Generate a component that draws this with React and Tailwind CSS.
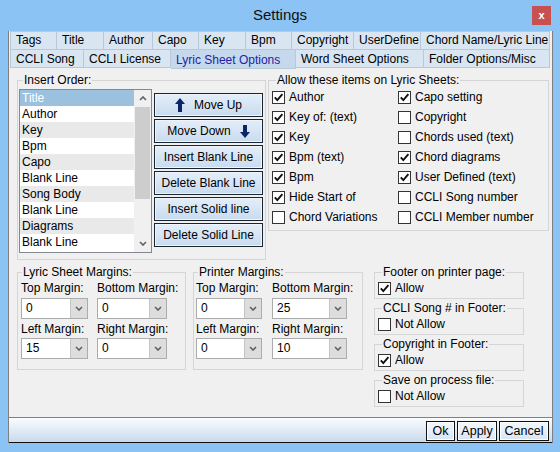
import React from 'react';

const row1 = [
  ['Tags', 'w-[47px]'],
  ['Title', 'w-[47px]'],
  ['Author', 'w-[49px]'],
  ['Capo', 'w-[46px]'],
  ['Key', 'w-[47px]'],
  ['Bpm', 'w-[46px]'],
  ['Copyright', 'w-[62px]'],
  ['UserDefine', 'w-[67px]'],
  ['Chord Name/Lyric Line', 'w-[129px]'],
];

const row2 = [
  ['CCLI Song', 'w-[74px]'],
  ['CCLI License', 'w-[87px]'],
  ['Lyric Sheet Options', 'w-[125px]', true],
  ['Word Sheet Options', 'w-[128px]'],
  ['Folder Options/Misc', 'w-[126px]'],
];

const order = ['Title', 'Author', 'Key', 'Bpm', 'Capo', 'Blank Line', 'Song Body', 'Blank Line', 'Diagrams', 'Blank Line'];

const allowLeft = [
  ['Author', true],
  ['Key of: (text)', true],
  ['Key', true],
  ['Bpm (text)', true],
  ['Bpm', true],
  ['Hide Start of', true],
  ['Chord Variations', false],
];

const allowRight = [
  ['Capo setting', true],
  ['Copyright', false],
  ['Chords used (text)', false],
  ['Chord diagrams', true],
  ['User Defined (text)', true],
  ['CCLI Song number', false],
  ['CCLI Member number', false],
];

const footers = [
  ['Footer on printer page:', 'Allow', true],
  ['CCLI Song # in Footer:', 'Not Allow', false],
  ['Copyright in Footer:', 'Allow', true],
  ['Save on process file:', 'Not Allow', false],
];

const Check = ({ checked }) => (
  <span className="w-[13px] h-[13px] border border-[#333333] bg-white flex items-center justify-center shrink-0">
    {checked && (
      <svg width="11" height="11" viewBox="0 0 11 11">
        <path d="M1.8 5.4 L4.3 8.1 L9.4 2.1" fill="none" stroke="#111" strokeWidth="1.9" />
      </svg>
    )}
  </span>
);

const Chevron = ({ up }) => (
  <svg width="8" height="5" viewBox="0 0 8 5">
    <polyline points={up ? '1,4 4,1 7,4' : '1,1 4,4 7,1'} fill="none" stroke="#606060" strokeWidth="1.6" />
  </svg>
);

const Combo = ({ value }) => (
  <div className="h-[21px] flex border border-[#acacac] bg-white">
    <span className="flex-1 pl-[4px] leading-[19px]">{value}</span>
    <span className="w-[17px] bg-[#dddddd] border-l border-[#c4c4c4] flex items-center justify-center">
      <Chevron />
    </span>
  </div>
);

const SideButton = ({ children }) => (
  <button className="h-[24px] w-full border border-[#1b2530] bg-gradient-to-b from-[#e4eefa] to-[#c8dbef] shadow-[inset_0_0_0_1px_#eef4fb] flex items-center justify-center gap-[9px] text-[12px]">
    {children}
  </button>
);

const DialogButton = ({ children, className }) => (
  <button className={`h-[20px] border border-[#111] bg-gradient-to-b from-[#f4f8fc] to-[#d9e5f2] shadow-[inset_0_0_0_1px_#ffffff] text-[12.5px] leading-[18px] ${className}`}>
    {children}
  </button>
);

export default function App() {
  return (
    <div className="w-[560px] h-[452px] bg-[#8bc3f4] flex flex-col font-['Liberation_Sans',Arial,sans-serif] text-[12px] text-black overflow-hidden">
      {/* title bar */}
      <div className="h-[31px] grid grid-cols-[1fr_auto_1fr] items-center">
        <div />
        <div className="text-[15px] text-[#111]">Settings</div>
        <div className="flex justify-end pr-[9px]">
          <div className="w-[19px] h-[19px] bg-[#c75050] flex items-center justify-center text-white text-[11px] font-bold leading-none">x</div>
        </div>
      </div>

      <div className="ml-[8px] w-[545px] h-[412px] flex flex-col border-l border-r border-[#7f7f7f] bg-[#f0f0f0]">
        {/* tabs */}
        <div className="flex pl-[1px] h-[18px]">
          {row1.map(([t, w], i) => (
            <div key={t} className={`${w} h-[18px] bg-[#d9e6f2] border-t border-r border-[#b7c8da] ${i === 0 ? 'border-l' : ''} pl-[5px] leading-[17px] whitespace-nowrap`}>
              {t}
            </div>
          ))}
        </div>
        <div className="flex pl-[1px] h-[20px] items-start">
          {row2.map(([t, w, sel], i) => (
            <div
              key={t}
              className={`${w} ${sel ? 'h-[20px] bg-[#c6d9ec] text-[#2323a6] pt-[3px]' : 'h-[19px] bg-[#d9e6f2] pt-[2px]'} border-t border-r border-b border-[#b7c8da] ${i === 0 ? 'border-l' : ''} pl-[5px] leading-[14px] whitespace-nowrap`}
            >
              {t}
            </div>
          ))}
        </div>

        {/* content */}
        <div className="h-[348px] flex flex-col">
          <div className="flex items-start mt-[4px]">
            <fieldset className="ml-[8px] w-[249px] h-[187px] border border-[#d5d5d5]">
              <legend className="ml-[5px] px-[1px] leading-[14px]">Insert Order:</legend>
              <div className="flex items-start">
                <div className="ml-[1px] mt-[2px] w-[133px] h-[164px] border border-[#828790] bg-white flex">
                  <div className="flex-1 flex flex-col">
                    {order.map((o, i) => (
                      <div
                        key={i}
                        className={`h-[16px] leading-[16px] pl-[2px] ${i === 0 ? 'bg-[#9bc1df] text-white' : i % 2 === 0 ? 'bg-[#e9e9e9]' : 'bg-white'}`}
                      >
                        {o}
                      </div>
                    ))}
                  </div>
                  <div className="w-[17px] bg-[#f0f0f0] flex flex-col items-center">
                    <div className="h-[17px] flex items-center justify-center"><Chevron up /></div>
                    <div className="w-[15px] h-[92px] bg-[#cdcdcd]" />
                    <div className="flex-1" />
                    <div className="h-[17px] flex items-center justify-center"><Chevron /></div>
                  </div>
                </div>
                <div className="ml-[2px] mt-[6px] w-[109px] flex flex-col gap-[2px]">
                  <SideButton>
                    <svg width="10" height="14" viewBox="0 0 10 14">
                      <path d="M5 0 L10 6 L7 6 L7 14 L3 14 L3 6 L0 6 Z" fill="#0b2567" />
                    </svg>
                    <span>Move Up</span>
                  </SideButton>
                  <SideButton>
                    <span>Move Down</span>
                    <svg width="10" height="13" viewBox="0 0 10 13">
                      <path d="M3 0 L7 0 L7 7 L10 7 L5 13 L0 7 L3 7 Z" fill="#0b2567" />
                    </svg>
                  </SideButton>
                  <SideButton>Insert Blank Line</SideButton>
                  <SideButton>Delete Blank Line</SideButton>
                  <SideButton>Insert Solid line</SideButton>
                  <SideButton>Delete Solid Line</SideButton>
                </div>
              </div>
            </fieldset>

            <fieldset className="ml-[2px] w-[281px] h-[158px] border border-[#d5d5d5]">
              <legend className="ml-[7px] px-[1px] leading-[14px]">Allow these items on Lyric Sheets:</legend>
              <div className="flex pl-[3px]">
                <div className="w-[126px] flex flex-col">
                  {allowLeft.map(([t, c]) => (
                    <div key={t} className="h-[20px] flex items-center gap-[4px] whitespace-nowrap">
                      <Check checked={c} />
                      <span>{t}</span>
                    </div>
                  ))}
                </div>
                <div className="flex flex-col">
                  {allowRight.map(([t, c]) => (
                    <div key={t} className="h-[20px] flex items-center gap-[4px] whitespace-nowrap">
                      <Check checked={c} />
                      <span>{t}</span>
                    </div>
                  ))}
                </div>
              </div>
            </fieldset>
          </div>

          <div className="flex items-start mt-[5px]">
            <fieldset className="ml-[8px] w-[169px] h-[105px] border border-[#d5d5d5]">
              <legend className="ml-[4px] px-[1px] leading-[14px]">Lyric Sheet Margins:</legend>
              <div className="pl-[3px] grid grid-cols-[67px_70px] gap-x-[9px]">
                <div className="h-[19px] leading-[18px] whitespace-nowrap">Top Margin:</div>
                <div className="h-[19px] leading-[18px] whitespace-nowrap">Bottom Margin:</div>
                <Combo value="0" />
                <Combo value="0" />
                <div className="h-[19px] leading-[20px] whitespace-nowrap">Left Margin:</div>
                <div className="h-[19px] leading-[20px] whitespace-nowrap">Right Margin:</div>
                <Combo value="15" />
                <Combo value="0" />
              </div>
            </fieldset>

            <fieldset className="ml-[7px] w-[170px] h-[105px] border border-[#d5d5d5]">
              <legend className="ml-[4px] px-[1px] leading-[14px]">Printer Margins:</legend>
              <div className="pl-[2px] grid grid-cols-[66px_75px] gap-x-[10px]">
                <div className="h-[19px] leading-[18px] whitespace-nowrap">Top Margin:</div>
                <div className="h-[19px] leading-[18px] whitespace-nowrap">Bottom Margin:</div>
                <Combo value="0" />
                <Combo value="25" />
                <div className="h-[19px] leading-[20px] whitespace-nowrap">Left Margin:</div>
                <div className="h-[19px] leading-[20px] whitespace-nowrap">Right Margin:</div>
                <Combo value="0" />
                <Combo value="10" />
              </div>
            </fieldset>

            <div className="ml-[11px] w-[150px] flex flex-col gap-[2px]">
              {footers.map(([label, t, c]) => (
                <fieldset key={label} className="h-[34px] border border-[#d5d5d5]">
                  <legend className="ml-[7px] px-[1px] leading-[14px] whitespace-nowrap">{label}</legend>
                  <div className="h-[18px] pl-[3px] flex items-center gap-[4px]">
                    <Check checked={c} />
                    <span>{t}</span>
                  </div>
                </fieldset>
              ))}
            </div>
          </div>
        </div>

        {/* bottom bar */}
        <div className="h-[26px] border-t border-t-[#808080] border-b border-b-[#111] bg-gradient-to-b from-[#fafcff] to-[#c9daec] flex justify-end items-start pt-[3px] pr-[3px] gap-[2px]">
          <DialogButton className="w-[29px]">Ok</DialogButton>
          <DialogButton className="w-[40px]">Apply</DialogButton>
          <DialogButton className="w-[50px]">Cancel</DialogButton>
        </div>
      </div>
    </div>
  );
}
